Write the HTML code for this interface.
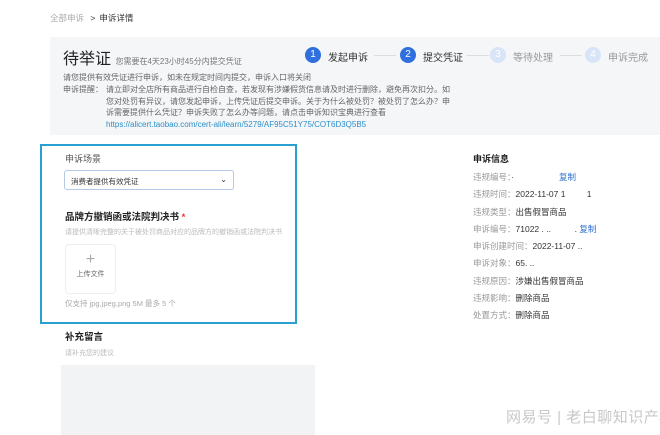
<!DOCTYPE html>
<html><head><meta charset="utf-8"><style>
*{margin:0;padding:0;box-sizing:border-box}
body{width:660px;height:435px;overflow:hidden;background:#fff;font-family:"Liberation Sans","Noto Sans CJK SC",sans-serif;color:#333;position:relative}
.a{position:absolute;white-space:nowrap}
.s{font-size:8px;color:#666}
.circ{position:absolute;width:16px;height:16px;border-radius:50%;color:#fff;font-size:10px;text-align:center;line-height:16px}
.r{font-size:8.5px;color:#999}
.r b{font-weight:normal;color:#333}
</style></head><body>
<div class="a" style="left:50px;top:12px;font-size:8.5px;color:#aaa">全部申诉 <span style="color:#333;margin:0 4px">&gt;</span><span style="color:#333">申诉详情</span></div>
<div class="a" style="left:50px;top:37px;width:610px;height:98px;background:#f5f6f8"></div>
<div class="a" style="left:63px;top:45px;font-size:16px;color:#222">待举证 <span style="font-size:8px;color:#777">您需要在4天23小时45分内提交凭证</span></div>
<div class="circ" style="left:305px;top:47px;background:#2f6fde">1</div>
<div class="a" style="left:328px;top:49px;font-size:10px;color:#333">发起申诉</div>
<div class="a" style="left:374px;top:55px;width:22px;height:1px;background:#ddd"></div>
<div class="circ" style="left:400px;top:47px;background:#2f6fde">2</div>
<div class="a" style="left:423px;top:49px;font-size:10px;color:#333">提交凭证</div>
<div class="a" style="left:467px;top:55px;width:22px;height:1px;background:#ddd"></div>
<div class="circ" style="left:490px;top:47px;background:#d8e4f8">3</div>
<div class="a" style="left:513px;top:49px;font-size:10px;color:#999">等待处理</div>
<div class="a" style="left:560px;top:55px;width:22px;height:1px;background:#ddd"></div>
<div class="circ" style="left:585px;top:47px;background:#d8e4f8">4</div>
<div class="a" style="left:608px;top:49px;font-size:10px;color:#999">申诉完成</div>
<div class="a s" style="left:63px;top:72px">请您提供有效凭证进行申诉，如未在规定时间内提交，申诉入口将关闭</div>
<div class="a s" style="left:63px;top:84px">申诉提醒：</div>
<div class="a s" style="left:106px;top:84px;line-height:11.5px">请立即对全店所有商品进行自检自查，若发现有涉嫌假货信息请及时进行删除，避免再次扣分。如<br>您对处罚有异议，请您发起申诉，上传凭证后提交申诉。关于为什么被处罚？被处罚了怎么办？申<br>诉需要提供什么凭证？申诉失败了怎么办等问题，请点击申诉知识宝典进行查看<br><span style="color:#2b8fc9">https://alicert.taobao.com/cert-ali/learn/5279/AF95C51Y75/COT6D3Q5B5</span></div>
<div class="a" style="left:40px;top:144px;width:257px;height:180px;border:2px solid #2a9fd0"></div>
<div class="a" style="left:65px;top:152px;font-size:9px;color:#555">申诉场景</div>
<div class="a" style="left:64px;top:170px;width:170px;height:20px;border:1px solid #b8c8e8;border-radius:3px;font-size:7.5px;padding:5px 6px;color:#333">消费者提供有效凭证<span style="position:absolute;right:6px;top:4px;font-size:8px">⌄</span></div>
<div class="a" style="left:65px;top:209px;font-size:9.5px;font-weight:bold;color:#222">品牌方撤销函或法院判决书 <span style="color:#e33">*</span></div>
<div class="a" style="left:65px;top:227px;font-size:7px;color:#bbb">请提供清晰完整的关于被处罚商品对应的品牌方的撤销函或法院判决书</div>
<div class="a" style="left:65px;top:244px;width:51px;height:50px;border:1px solid #eee;border-radius:4px;text-align:center;font-size:7px;color:#666"><div style="font-size:16px;color:#aaa;margin-top:6px;line-height:18px">+</div>上传文件</div>
<div class="a" style="left:65px;top:298px;font-size:7.5px;color:#aaa">仅支持 jpg,jpeg,png 5M 最多 5 个</div>
<div class="a" style="left:65px;top:329px;font-size:9.5px;font-weight:bold;color:#222">补充留言</div>
<div class="a" style="left:65px;top:348px;font-size:7px;color:#bbb">请补充您的建议</div>
<div class="a" style="left:61px;top:365px;width:254px;height:70px;background:#f2f3f5"></div>
<div class="a" style="left:473px;top:152px;font-size:9px;font-weight:bold;color:#222">申诉信息</div>
<div class="a r" style="left:473px;top:169px;line-height:17.3px">违规编号：<b>·  </b>&nbsp;&nbsp;&nbsp;&nbsp;&nbsp;&nbsp;&nbsp;&nbsp;&nbsp;&nbsp;&nbsp;&nbsp;&nbsp;&nbsp;&nbsp;&nbsp;&nbsp;&nbsp;<span style="color:#2b6fd0">复制</span><br>违规时间：<b>2022-11-07 1&nbsp;&nbsp;&nbsp;&nbsp;&nbsp;&nbsp;&nbsp;&nbsp;&nbsp;1</b><br>违规类型：<b>出售假冒商品</b><br>申诉编号：<b>71022 . ..&nbsp;&nbsp;&nbsp;&nbsp;&nbsp;&nbsp;&nbsp;&nbsp;&nbsp;&nbsp;.</b> <span style="color:#2b6fd0">复制</span><br>申诉创建时间：<b>2022-11-07 ..</b><br>申诉对象：<b>65. ..</b><br>违规原因：<b>涉嫌出售假冒商品</b><br>违规影响：<b>删除商品</b><br>处置方式：<b>删除商品</b></div>
<div class="a" style="left:506px;top:406px;font-size:15px;color:#c8c8c8;letter-spacing:0.5px">网易号 | 老白聊知识产权</div>
</body></html>
